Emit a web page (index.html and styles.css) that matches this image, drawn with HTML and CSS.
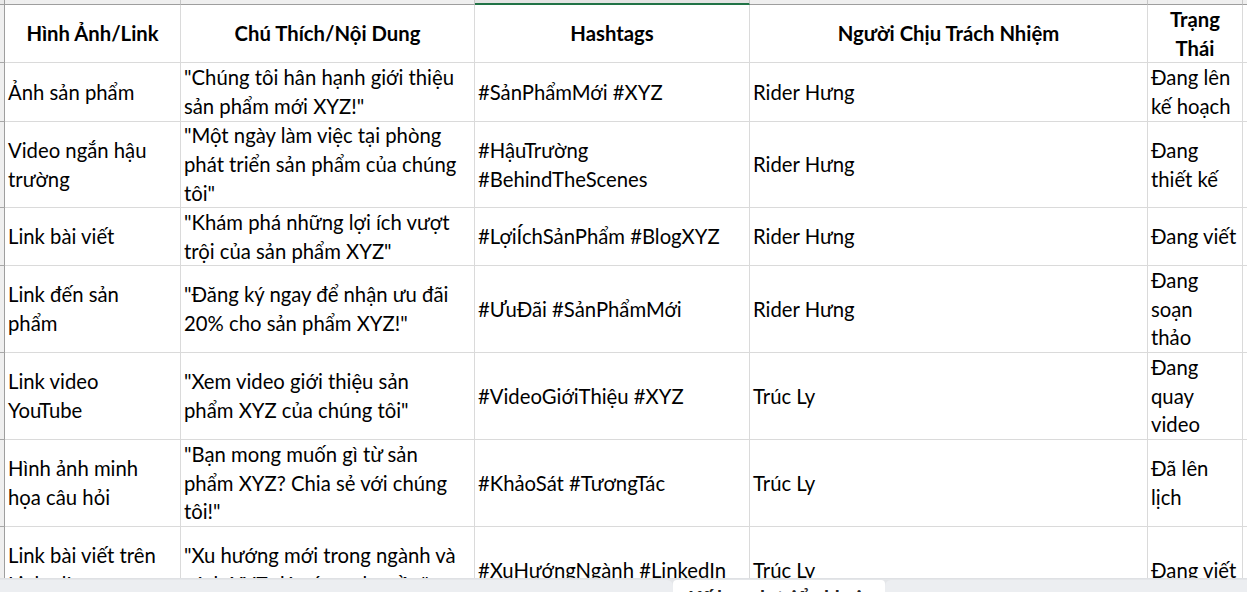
FILE: index.html
```html
<!DOCTYPE html>
<html lang="vi">
<head>
<meta charset="utf-8">
<title>Kế hoạch nội dung</title>
<link rel="stylesheet" href="styles.css">
</head>
<body>
<div class="app">
  <div class="sheet">
    <div class="grid">
      <div class="corner"></div>
      <div class="colhead"></div>
      <div class="colhead"></div>
      <div class="colhead selected"></div>
      <div class="colhead"></div>
      <div class="colhead"></div>
      <div class="colhead last"></div>

      <div class="rowhead"></div>
      <div class="cell head">Hình Ảnh/Link</div>
      <div class="cell head">Chú Thích/Nội Dung</div>
      <div class="cell head">Hashtags</div>
      <div class="cell head">Người Chịu Trách Nhiệm</div>
      <div class="cell head">Trạng<br>Thái</div>
      <div class="cell"></div>

      <div class="rowhead"></div>
      <div class="cell">Ảnh sản phẩm</div>
      <div class="cell">"Chúng tôi hân hạnh giới thiệu<br>sản phẩm mới XYZ!"</div>
      <div class="cell">#SảnPhẩmMới #XYZ</div>
      <div class="cell">Rider Hưng</div>
      <div class="cell">Đang lên<br>kế hoạch</div>
      <div class="cell"></div>

      <div class="rowhead"></div>
      <div class="cell">Video ngắn hậu<br>trường</div>
      <div class="cell">"Một ngày làm việc tại phòng<br>phát triển sản phẩm của chúng<br>tôi"</div>
      <div class="cell">#HậuTrường<br>#BehindTheScenes</div>
      <div class="cell">Rider Hưng</div>
      <div class="cell">Đang<br>thiết kế</div>
      <div class="cell"></div>

      <div class="rowhead"></div>
      <div class="cell">Link bài viết</div>
      <div class="cell">"Khám phá những lợi ích vượt<br>trội của sản phẩm XYZ"</div>
      <div class="cell">#LợiÍchSảnPhẩm #BlogXYZ</div>
      <div class="cell">Rider Hưng</div>
      <div class="cell">Đang viết</div>
      <div class="cell"></div>

      <div class="rowhead"></div>
      <div class="cell">Link đến sản<br>phẩm</div>
      <div class="cell">"Đăng ký ngay để nhận ưu đãi<br>20% cho sản phẩm XYZ!"</div>
      <div class="cell">#ƯuĐãi #SảnPhẩmMới</div>
      <div class="cell">Rider Hưng</div>
      <div class="cell">Đang<br>soạn<br>thảo</div>
      <div class="cell"></div>

      <div class="rowhead"></div>
      <div class="cell">Link video<br>YouTube</div>
      <div class="cell">"Xem video giới thiệu sản<br>phẩm XYZ của chúng tôi"</div>
      <div class="cell">#VideoGiớiThiệu #XYZ</div>
      <div class="cell">Trúc Ly</div>
      <div class="cell">Đang<br>quay<br>video</div>
      <div class="cell"></div>

      <div class="rowhead"></div>
      <div class="cell">Hình ảnh minh<br>họa câu hỏi</div>
      <div class="cell">"Bạn mong muốn gì từ sản<br>phẩm XYZ? Chia sẻ với chúng<br>tôi!"</div>
      <div class="cell">#KhảoSát #TươngTác</div>
      <div class="cell">Trúc Ly</div>
      <div class="cell">Đã lên<br>lịch</div>
      <div class="cell"></div>

      <div class="rowhead"></div>
      <div class="cell">Link bài viết trên<br>LinkedIn</div>
      <div class="cell">"Xu hướng mới trong ngành và<br>cách XYZ đáp ứng nhu cầu"</div>
      <div class="cell">#XuHướngNgành #LinkedIn</div>
      <div class="cell">Trúc Ly</div>
      <div class="cell">Đang viết</div>
      <div class="cell"></div>
    </div>
  </div>
  <div class="tabbar">
    <div class="tab-gap left"></div>
    <div class="tab active">Kế hoạch triển khai</div>
    <div class="tab-gap right"></div>
  </div>
</div>
</body>
</html>
```

FILE: styles.css
```css
* { box-sizing: border-box; }
html, body {
  margin: 0;
  padding: 0;
  width: 1247px;
  height: 592px;
  overflow: hidden;
  background: #ffffff;
}
.app {
  display: flex;
  flex-direction: column;
  width: 1247px;
  height: 592px;
  font-family: Lato, "Noto Sans", sans-serif;
  color: #000;
}
.sheet {
  flex: 1;
  overflow: hidden;
}
.grid {
  display: grid;
  grid-template-columns: 5px 176px 294px 275px 398px 95px 30px;
  grid-template-rows: 5px 58px 59px 86px 58px 87px 87px 87px 87px;
}
.corner {
  background: #e9e9e9;
  border-right: 1px solid #9e9e9e;
  border-bottom: 1px solid #9e9e9e;
}
.colhead {
  background: #efefef;
  border-right: 1px solid #c6c6c6;
  border-bottom: 1px solid #9e9e9e;
}
.colhead.selected {
  background: #e3e3e3;
  border-bottom: 2px solid #217346;
}
.rowhead {
  background: #efefef;
  border-right: 1px solid #9e9e9e;
  border-bottom: 1px solid #a8a8a8;
}
.cell {
  display: flex;
  align-items: center;
  padding: 0 3px;
  border-right: 1px solid #dadada;
  border-bottom: 1px solid #dadada;
  font-size: 20.3px;
  line-height: 28.7px;
  white-space: nowrap;
  overflow: hidden;
}
.cell.head {
  justify-content: center;
  text-align: center;
  font-weight: 700;
}
.tabbar {
  flex: 0 0 14px;
  display: flex;
  align-items: flex-end;
  background: #e4e6e9;
  border-top: 1px solid #dfe1e4;
  overflow: hidden;
}
.tab-gap {
  height: 12px;
  background: #eceef1;
}
.tab-gap.left {
  width: 673px;
  border-top-right-radius: 6px;
}
.tab-gap.right {
  flex: 1;
  border-top-left-radius: 6px;
}
.tab.active {
  width: 212px;
  height: 12px;
  background: #ffffff;
  padding: 4px 0 0 15px;
  font-size: 20.3px;
  font-weight: 700;
  color: #242424;
  line-height: 28px;
  white-space: nowrap;
  overflow: hidden;
  border-top-left-radius: 4px;
  border-top-right-radius: 4px;
}
```
